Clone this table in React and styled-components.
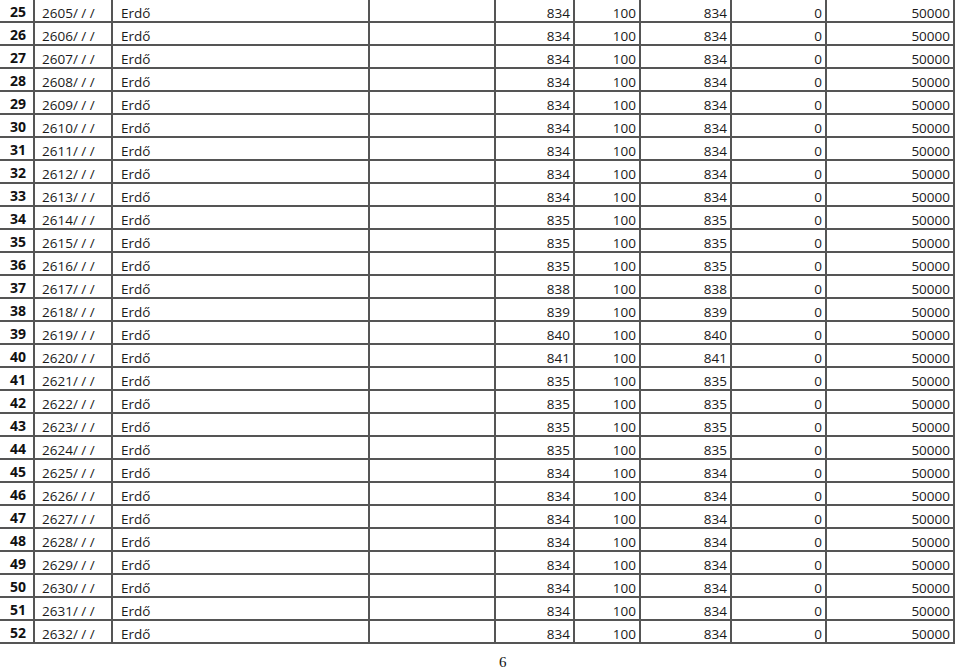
import React from "react";
import styled, { createGlobalStyle } from "styled-components";

const GlobalStyle = createGlobalStyle`
  html, body {
    margin: 0;
    padding: 0;
    background: #ffffff;
  }
  body {
    font-family: "Open Sans", "Lato", sans-serif;
    color: #111111;
  }
`;

// column widths measured off the page (px)
const COLS = "35px 78px 257px 126px 79px 66px 91px 95px 128px";

const values = [
    834, 834, 834, 834, 834, 834, 834, 834, 834, 835, 835, 835, 838, 839,
    840, 841, 835, 835, 835, 835, 834, 834, 834, 834, 834, 834, 834, 834,
];

const rows = values.map((v, i) => ({
    no: 25 + i,
    parcel: `${2605 + i}/ / /`,
    use: "Erdő",
    area: v,
    pct: 100,
    total: v,
    zero: 0,
    value: 50000,
}));

function App() {
    return (
        <>
            <GlobalStyle />
            <Page>
                <Table>
                    {rows.map((r) => (
                        <Row key={r.no}>
                            <NumCell>{r.no}</NumCell>
                            <Cell>{r.parcel}</Cell>
                            <Cell $pad={8}>{r.use}</Cell>
                            <Cell />
                            <Cell $right>{r.area}</Cell>
                            <Cell $right>{r.pct}</Cell>
                            <Cell $right>{r.total}</Cell>
                            <Cell $right>{r.zero}</Cell>
                            <Cell $right>{r.value}</Cell>
                        </Row>
                    ))}
                </Table>
                <PageNumber>6</PageNumber>
            </Page>
        </>
    );
}

const Page = styled.div`
  width: 959px;
  height: 671px;
  overflow: hidden;
  display: flex;
  flex-direction: column;
`;

const Table = styled.div`
  display: flex;
  flex-direction: column;
  width: 955px;
`;

const Row = styled.div`
  display: grid;
  grid-template-columns: ${COLS};
  height: 23px;
  box-sizing: border-box;
  border-bottom: 2px solid #555555;
`;

const Cell = styled.div`
  box-sizing: border-box;
  border-right: 2px solid #555555;
  font-size: 13.5px;
  line-height: 13.5px;
  padding-top: 7px;
  padding-left: ${(p) => (p.$right ? 0 : p.$pad || 7)}px;
  padding-right: ${(p) => (p.$right ? 3 : 0)}px;
  text-align: ${(p) => (p.$right ? "right" : "left")};
  white-space: nowrap;
  color: #1a1a1a;
`;

const NumCell = styled(Cell)`
  font-weight: 700;
  font-size: 14px;
  padding-top: 5px;
  padding-left: 10px;
  color: #111111;
`;

const PageNumber = styled.div`
  font-family: "Liberation Serif", "Times New Roman", serif;
  font-size: 15px;
  line-height: 15px;
  margin-top: 11px;
  padding-left: 499px;
  color: #111111;
`;

export default App;
